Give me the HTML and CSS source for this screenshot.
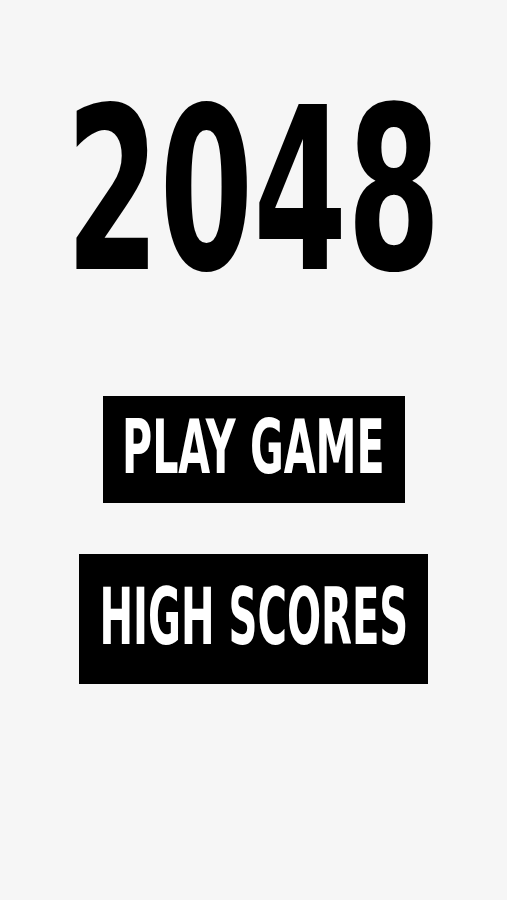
FILE: index.html
```html
<!DOCTYPE html>
<html>
<head>
<meta charset="utf-8">
<link rel="stylesheet" href="styles.css">
</head>
<body>
<main class="screen">
  <h1 class="title"><span class="title-text">2048</span></h1>
  <nav class="menu">
    <button class="btn btn-play"><span class="btn-text">PLAY GAME</span></button>
    <button class="btn btn-scores"><span class="btn-text">HIGH SCORES</span></button>
  </nav>
</main>
</body>
</html>
```
FILE: styles.css
```css
html, body {
  margin: 0;
  padding: 0;
  background: #f6f6f6;
}
.screen {
  display: flex;
  flex-direction: column;
  align-items: center;
  width: 100%;
  min-height: 900px;
  overflow: hidden;
  font-family: "DejaVu Sans Condensed", "DejaVu Sans", sans-serif;
  font-stretch: condensed;
  font-weight: 700;
}
.title {
  margin: 77px 0 0 0;
  font-size: 227px;
  line-height: 1;
  font-weight: 700;
  color: #000;
  white-space: nowrap;
}
.title-text {
  display: inline-block;
  transform: scaleX(0.66);
}
.menu {
  display: flex;
  flex-direction: column;
  align-items: center;
  margin-top: 92px;
  gap: 51px;
}
.btn {
  display: flex;
  align-items: center;
  justify-content: center;
  box-sizing: border-box;
  padding: 0 0 5px 0;
  font-family: inherit;
  font-weight: 700;
  background: #000;
  color: #fff;
  border: 0;
  line-height: 1;
  white-space: nowrap;
  overflow: visible;
}
.btn-text {
  display: inline-block;
}
.btn-play {
  width: 302px;
  height: 107px;
  font-size: 75px;
}
.btn-play .btn-text {
  transform: scaleX(0.61);
}
.btn-scores {
  width: 349px;
  height: 130px;
  font-size: 78px;
}
.btn-scores .btn-text {
  transform: scaleX(0.572);
}
```
